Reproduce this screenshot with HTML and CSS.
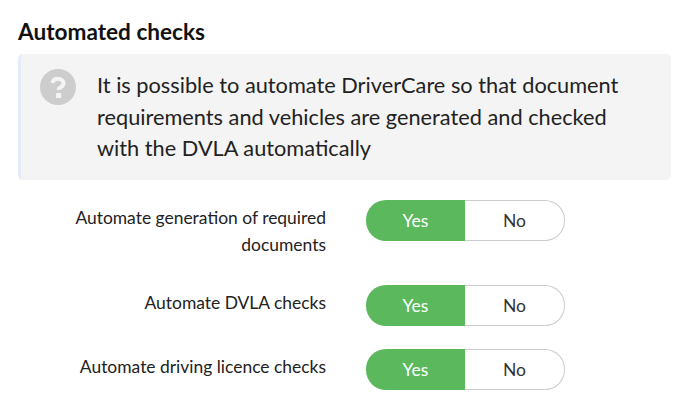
FILE: index.html
```html
<!DOCTYPE html>
<html lang="en">
<head>
    <meta charset="UTF-8">
    <title>Automated checks</title>
    <link rel="stylesheet" href="styles.css">
</head>
<body>
    <h2>Automated checks</h2>
    <div class="callout">
        <svg class="callout-icon" width="36" height="36" viewBox="0 0 36 36">
            <circle cx="18" cy="18" r="18" fill="#cdcdcd"/>
            <path d="M12.5 14c.4-2.6 2.6-4.2 5.5-4.2 3.1 0 5.5 1.9 5.5 4.6 0 3.6-4.9 3.8-4.9 6.6" fill="none" stroke="#f4f4f4" stroke-width="4"/>
            <rect x="16" y="24" width="5.2" height="5" rx=".6" fill="#f4f4f4"/>
        </svg>
        <p>It is possible to automate DriverCare so that document requirements and vehicles are generated and checked with the DVLA automatically</p>
    </div>
    <div class="row">
        <label>Automate generation of required documents</label>
        <div class="toggle"><span class="yes">Yes</span><span class="no">No</span></div>
    </div>
    <div class="row">
        <label>Automate DVLA checks</label>
        <div class="toggle"><span class="yes">Yes</span><span class="no">No</span></div>
    </div>
    <div class="row">
        <label>Automate driving licence checks</label>
        <div class="toggle"><span class="yes">Yes</span><span class="no">No</span></div>
    </div>
</body>
</html>
```

FILE: styles.css
```css
body {
    font-family: 'Lato', sans-serif;
    background-color: #fff;
    color: #222;
    margin: 0;
    padding: 19px 12px 0 18px;
}
h2 {
    margin: 0 0 9px;
    font-size: 22.6px;
    line-height: 26px;
    font-weight: 700;
    color: #111;
}
.callout {
    display: flex;
    background: #f4f4f4;
    border-left: 3px solid #e3edf7;
    border-radius: 5px;
    padding: 16px 20px 15px 19px;
    gap: 21px;
    margin-bottom: 20px;
}
.callout-icon {
    flex: none;
    margin-top: -1px;
}
.callout p {
    margin: 0;
    font-size: 21.75px;
    line-height: 31.5px;
    color: #222;
}
.row {
    display: flex;
    align-items: flex-start;
    margin-bottom: 23px;
}
.row label {
    width: 308px;
    padding: 4px 0;
    text-align: right;
    font-size: 17.45px;
    line-height: 27px;
    margin-right: 40px;
}
.toggle {
    display: flex;
    width: 199px;
    height: 41px;
    font-size: 17.55px;
}
.toggle span {
    flex: 1;
    display: flex;
    align-items: center;
    justify-content: center;
    box-sizing: border-box;
}
.yes {
    background: #5cb85c;
    color: #fff;
    border-radius: 20px 0 0 20px;
}
.no {
    border: 1px solid #ccc;
    border-left: none;
    border-radius: 0 20px 20px 0;
    color: #333;
}
```
